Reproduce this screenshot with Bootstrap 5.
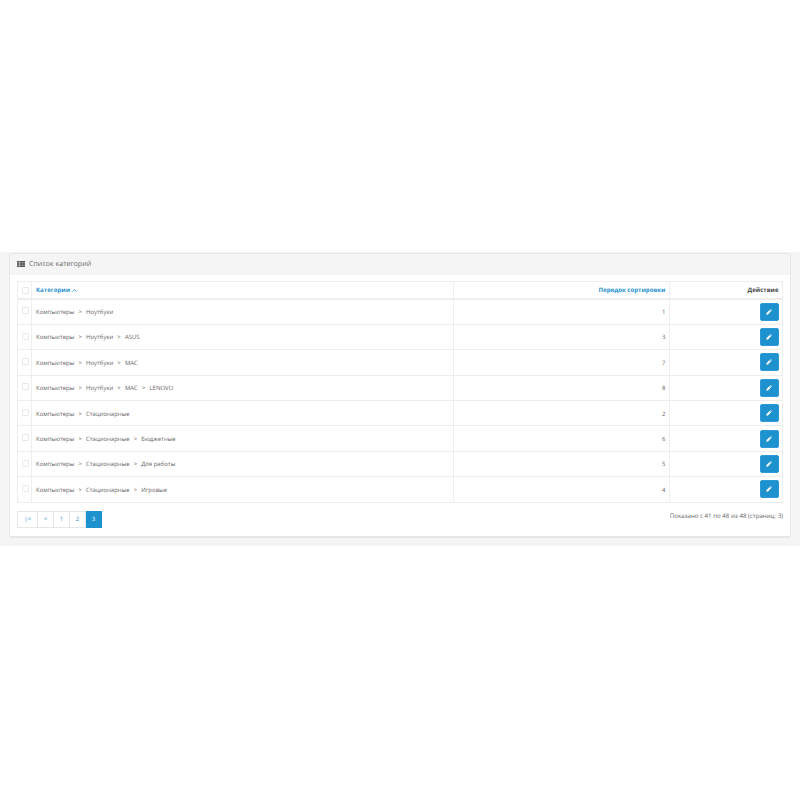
<!DOCTYPE html>
<html lang="ru">

<head>
    <meta charset="UTF-8">
    <meta name="viewport" content="width=device-width, initial-scale=1.0">
    <title>Список категорий</title>
    <link href="https://cdn.jsdelivr.net/npm/bootstrap@5.3.2/dist/css/bootstrap.min.css" rel="stylesheet">

    <style>
        body {
            background: #fff;
            font-family: "Open Sans", sans-serif;
            font-size: 6px;
            color: #666;
            text-rendering: geometricPrecision;
        }

        .page-band {
            margin-top: 252px;
            background: #f5f5f5;
            padding: 1px 9px 8px;
        }

        .list-panel {
            background: #fff;
            border: 1px solid #e6e6e6;
            border-bottom-width: 2px;
            border-radius: 2px;
            height: 285px;
        }

        .list-head {
            background: #f5f5f5;
            height: 21px;
            padding: 0 7px;
            font-size: 7.1px;
            color: #666;
            gap: 4px;
        }

        .head-icon {
            margin-bottom: 1px;
        }

        .list-body {
            padding: 6px 7px 7px;
        }

        .cat-table {
            table-layout: fixed;
            width: 100%;
            margin: 0;
            border-collapse: collapse;
        }

        .cat-table td,
        .cat-table th {
            border: 1px solid #eee;
            padding: 0 3.5px 0 4px;
            vertical-align: middle;
            color: #666;
            font-size: 6px;
        }

        .cat-table thead th {
            height: 17.5px;
            border-bottom-width: 2px;
            font-weight: 700;
            font-size: 6.1px;
        }

        .cat-table thead th.col-sort {
            color: #1e91cf;
        }

        .cat-table thead th.col-act {
            color: #444;
        }

        .cat-table tbody td {
            height: 25.4px;
        }

        .cat-table tbody td.text-cell {
            padding-top: 1.5px;
        }

        .col-check {
            width: 14px;
        }

        .col-order {
            width: 216.5px;
        }

        .col-action {
            width: 113px;
        }

        .check-box {
            display: block;
            width: 7px;
            height: 7px;
            margin: 0 auto;
            border: 1px solid #e8e8e8;
            border-radius: 1px;
            background: #fff;
        }

        tbody .check-box {
            margin-top: -2px;
        }

        .crumb-sep {
            margin: 0 2.5px;
        }

        .edit-btn {
            width: 19px;
            height: 18px;
            padding: 0;
            background: #1e91cf;
            border: 1px solid #2b9ad6;
            border-radius: 2px;
        }

        .foot-row {
            margin-top: 8px;
        }

        .pager {
            height: 17px;
        }

        .pager-item {
            height: 17px;
            min-width: 16px;
            padding: 0 5px;
            border: 1px solid #e6e6e6;
            border-left-width: 0;
            color: #1e91cf;
            background: #fff;
            font-size: 6px;
            text-decoration: none;
        }

        .pager-item:first-child {
            border-left-width: 1px;
            min-width: 21px;
        }

        .pager-item.is-current {
            background: #1e91cf;
            border-color: #1e91cf;
            color: #fff;
        }

        .foot-info {
            font-size: 6.15px;
            color: #666;
            line-height: 10px;
        }
    </style>
</head>

<body>
    <div class="page-band">
        <div class="list-panel">
            <div class="list-head d-flex align-items-center">
                <svg class="head-icon" width="8" height="6" viewBox="0 0 8 6" fill="#555">
                    <rect x="0" y="0" width="2" height="1.7" />
                    <rect x="2.4" y="0" width="5.6" height="1.7" />
                    <rect x="0" y="2.15" width="2" height="1.7" />
                    <rect x="2.4" y="2.15" width="5.6" height="1.7" />
                    <rect x="0" y="4.3" width="2" height="1.7" />
                    <rect x="2.4" y="4.3" width="5.6" height="1.7" />
                </svg>
                <span>Список категорий</span>
            </div>
            <div class="list-body">
                <table class="cat-table">
                    <thead>
                        <tr>
                            <th class="col-check"><span class="check-box"></span></th>
                            <th class="col-sort">Категории
                                <svg width="5" height="3" viewBox="0 0 5 3" fill="none" stroke="#1e91cf" stroke-width="0.9">
                                    <path d="M0.5 2.6 L2.5 0.8 L4.5 2.6" />
                                </svg>
                            </th>
                            <th class="col-order col-sort text-end">Порядок сортировки</th>
                            <th class="col-action col-act text-end">Действие</th>
                        </tr>
                    </thead>
                    <tbody id="rows"></tbody>
                </table>
                <div class="foot-row d-flex justify-content-between align-items-start">
                    <div class="pager d-flex">
                        <a class="pager-item d-flex align-items-center justify-content-center" href="#">|&lt;</a>
                        <a class="pager-item d-flex align-items-center justify-content-center" href="#">&lt;</a>
                        <a class="pager-item d-flex align-items-center justify-content-center" href="#">1</a>
                        <a class="pager-item d-flex align-items-center justify-content-center" href="#">2</a>
                        <a class="pager-item is-current d-flex align-items-center justify-content-center" href="#">3</a>
                    </div>
                    <div class="foot-info">Показано с 41 по 48 из 48 (страниц: 3)</div>
                </div>
            </div>
        </div>
    </div>

    <script>
        // Строки таблицы: путь категории и порядок сортировки
        const categories = [
            [['Компьютеры', 'Ноутбуки'], 1],
            [['Компьютеры', 'Ноутбуки', 'ASUS'], 3],
            [['Компьютеры', 'Ноутбуки', 'MAC'], 7],
            [['Компьютеры', 'Ноутбуки', 'MAC', 'LENOVO'], 8],
            [['Компьютеры', 'Стационарные'], 2],
            [['Компьютеры', 'Стационарные', 'Бюджетные'], 6],
            [['Компьютеры', 'Стационарные', 'Для работы'], 5],
            [['Компьютеры', 'Стационарные', 'Игровые'], 4],
        ];

        const pencil = `<svg width="6" height="6" viewBox="0 0 7 7" fill="#fff">
            <path d="M0.4 6.6 L0.7 4.7 L4.3 1.1 L5.9 2.7 L2.3 6.3 Z" />
            <path d="M4.8 0.6 L5.2 0.3 Q5.5 0.1 5.8 0.3 L6.7 1.2 Q6.9 1.5 6.7 1.8 L6.4 2.2 Z" />
        </svg>`;

        const tbody = document.getElementById('rows');
        categories.forEach(([path, order]) => {
            const name = path.join('<span class="crumb-sep">&nbsp;&gt;&nbsp;</span>');
            tbody.innerHTML += `
                <tr>
                    <td><span class="check-box"></span></td>
                    <td class="text-cell">${name}</td>
                    <td class="text-cell text-end">${order}</td>
                    <td class="text-end"><button class="edit-btn btn d-inline-flex align-items-center justify-content-center">${pencil}</button></td>
                </tr>`;
        });
    </script>
    <script src="https://cdn.jsdelivr.net/npm/bootstrap@5.3.2/dist/js/bootstrap.bundle.min.js"></script>
</body>

</html>
